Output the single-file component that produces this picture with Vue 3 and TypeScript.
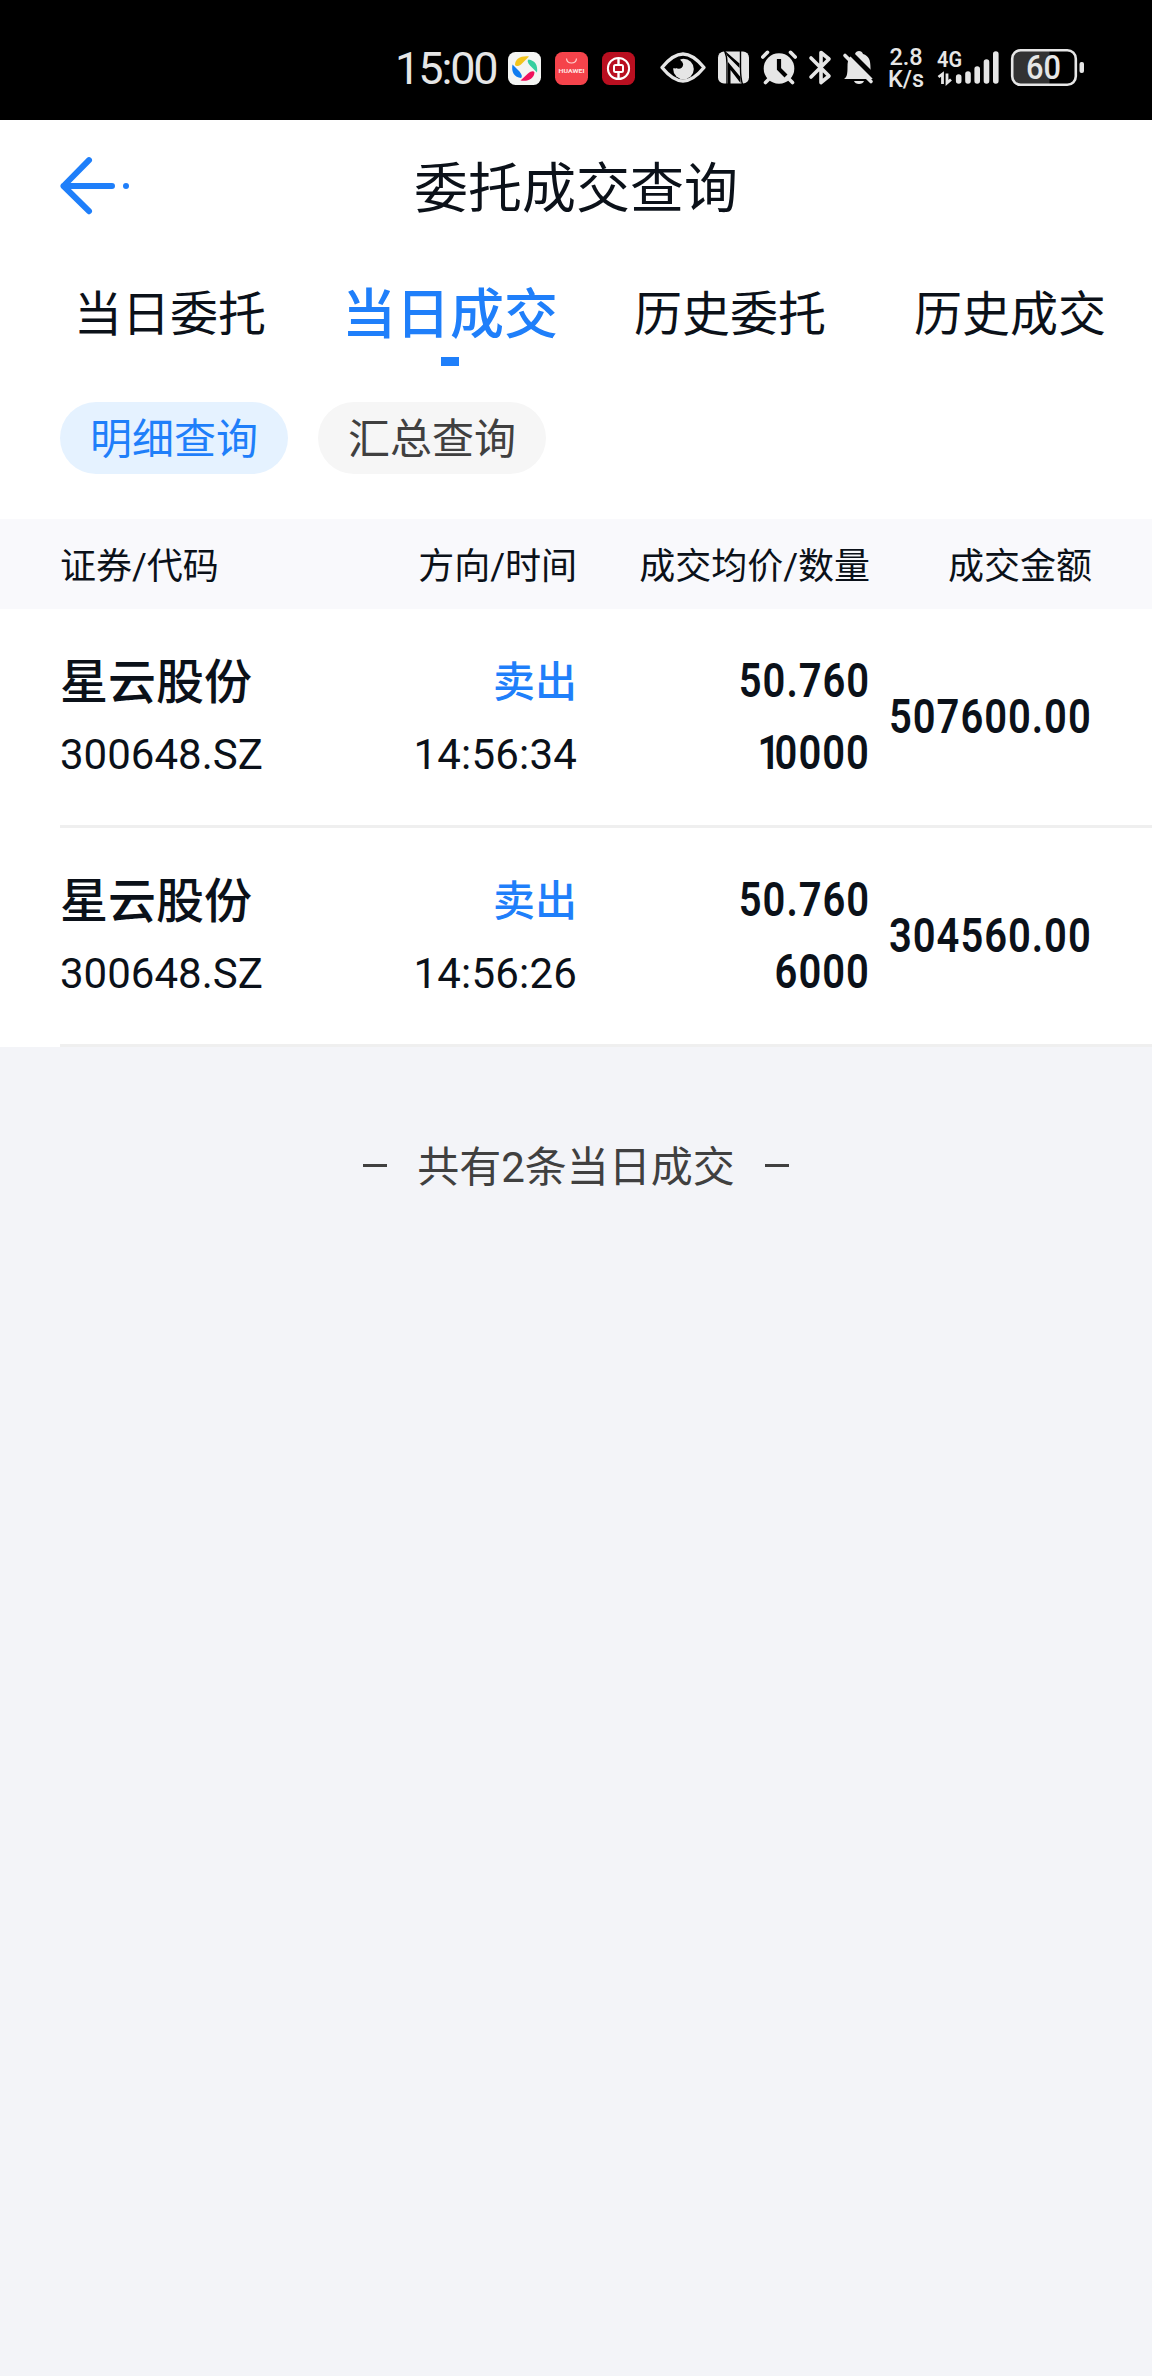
<script setup lang="ts">
interface Deal {
  name: string
  code: string
  side: string
  time: string
  price: string
  quantity: string
  amount: string
}

const tabs: string[] = ['当日委托', '当日成交', '历史委托', '历史成交']
const activeTab = 1
const chips: string[] = ['明细查询', '汇总查询']
const activeChip = 0
const columns: string[] = ['证券/代码', '方向/时间', '成交均价/数量', '成交金额']

const deals: Deal[] = [
  { name: '星云股份', code: '300648.SZ', side: '卖出', time: '14:56:34', price: '50.760', quantity: '10000', amount: '507600.00' },
  { name: '星云股份', code: '300648.SZ', side: '卖出', time: '14:56:26', price: '50.760', quantity: '6000', amount: '304560.00' },
]
</script>

<template>
  <div class="screen">
    <div class="status">
      <span class="clock">15:00</span>
      <svg class="app-icon" viewBox="0 0 33 33">
        <rect width="33" height="33" rx="7.500" fill="#f4f5f3" />
        <path d="M7 13C7 7 13 3.500 21 4.500L13 12.500C10 14.500 8 14.500 7 13Z" fill="#f3c51c" />
        <path d="M20.500 7.500C27 8.500 30 13 29 20.500L22 13.500C19.500 10.500 19 8.500 20.500 7.500Z" fill="#36cfa0" />
        <path d="M26.500 20.500C26 26.500 20 30 12.500 28.500L20 21.500C23 19 25.500 18.500 26.500 20.500Z" fill="#f0115c" />
        <path d="M13 26C6.500 25.500 3 20 4.500 12.500L11.500 19.500C14 22.500 14.500 25 13 26Z" fill="#0f7cf0" />
      </svg>
      <svg class="app-icon" viewBox="0 0 33 33">
        <rect width="33" height="33" rx="7.500" fill="#f5434b" />
        <path d="M11.500 6.500C12 12.500 21 12.500 21.500 6.500" fill="none" stroke="#ffd5d3" stroke-width="1.200" />
        <text x="16.500" y="21" text-anchor="middle" font-size="6" font-weight="700" textLength="26" lengthAdjust="spacingAndGlyphs" fill="#ffe6e4">HUAWEI</text>
      </svg>
      <svg class="app-icon" viewBox="0 0 33 33">
        <rect width="33" height="33" rx="7.500" fill="#b90f20" />
        <g fill="none" stroke="#fff">
          <circle cx="16.500" cy="16.500" r="10.600" stroke-width="2" />
          <rect x="12" y="13" width="9" height="7" rx="1.500" stroke-width="2" />
          <path d="M16.500 6V13M16.500 20V27" stroke-width="2.400" />
        </g>
      </svg>
      <svg class="glyphs" width="218" height="40" viewBox="658 48 218 40">
        <path d="M662 67.500C671 56.500 677 54 683 54S695 56.500 704 67.500C695 78.500 689 81 683 81S671 78.500 662 67.500Z" fill="none" stroke="#e6e6e6" stroke-width="3.400" stroke-linejoin="round" />
        <circle cx="683.500" cy="69" r="10.300" fill="#e6e6e6" />
        <circle cx="678.800" cy="64.500" r="4.300" fill="#000" />
        <path d="M671 65L673 61L680 58L681 62L676 68.500L672 68Z" fill="#000" />
        <rect x="718" y="51.500" width="31" height="32" rx="6" fill="#e6e6e6" />
        <path d="M725 51L739.500 63.500V68L727 55.500ZM728 62L740.500 77V83L730.500 70V84H728Z" fill="#000" />
        <path d="M724.500 50.500Q727 56 727 64V84.500M742.500 84.500Q740.500 78 740.500 68V50.500" fill="none" stroke="#000" stroke-width="1.400" />
        <circle cx="779" cy="68.500" r="15.300" fill="#e6e6e6" />
        <path d="M762.800 57L767.500 52.300M790.500 52.300L795.200 57M769 79L765.500 82.500M789 79L792.500 82.500" stroke="#e6e6e6" stroke-width="3.600" stroke-linecap="round" />
        <path d="M779 59V69L786 76" fill="none" stroke="#000" stroke-width="4.200" />
        <path d="M811 58L829 76L821 82.500V52.500L829 59L811 77" fill="none" stroke="#e6e6e6" stroke-width="3.600" stroke-linecap="round" stroke-linejoin="round" />
        <path d="M844 79C847 77 847.500 74 847.500 67C847.500 58 850 55.500 855 54C856 50 862 50 863 54C869 56 870.500 60 870.500 68C870.500 74 871 76 873 79Z" fill="#e6e6e6" />
        <path d="M854 81H864C863 85 855 85 854 81Z" fill="#e6e6e6" />
        <path d="M848 50.500L876 78.500" stroke="#000" stroke-width="5" />
        <path d="M845 55.500L871 81.500" stroke="#e6e6e6" stroke-width="3.600" stroke-linecap="round" />
      </svg>
      <div class="speed"><span>2.8</span><span>K/s</span></div>
      <svg class="signal" width="64" height="44" viewBox="936 44 64 44">
        <text x="937" y="67" font-size="22" font-weight="600" textLength="25" lengthAdjust="spacingAndGlyphs" fill="#e6e6e6">4G</text>
        <path d="M938.500 77L942.500 74V84M947 73.500V83L951 79.500" fill="none" stroke="#e6e6e6" stroke-width="2.800" />
        <path d="M958.700 77V81M968 74V81M977.200 69V81M986.500 62V81M995.800 54V81" stroke="#e6e6e6" stroke-width="5.600" stroke-linecap="round" />
      </svg>
      <svg class="battery" width="76" height="40" viewBox="1010 48 76 40">
        <path d="M1021 50.500H1049.500V84.500H1021Q1012.500 84.500 1012.500 76V59Q1012.500 50.500 1021 50.500Z" fill="#333" />
        <rect x="1012.200" y="50.200" width="63.600" height="34.600" rx="8.500" fill="none" stroke="#e6e6e6" stroke-width="2.600" />
        <rect x="1079.500" y="62" width="4.500" height="11" rx="2" fill="#e6e6e6" />
        <text x="1043.500" y="79.200" text-anchor="middle" font-size="33" font-weight="500" textLength="35" lengthAdjust="spacingAndGlyphs" fill="#e6e6e6">60</text>
      </svg>
    </div>

    <header class="top">
      <svg class="back" width="72" height="60" viewBox="0 0 72 60">
        <path d="M29 4.200L3.500 30L29 55.200M3.500 30H52" fill="none" stroke="#1f7ffa" stroke-width="6" stroke-linecap="round" stroke-linejoin="round" />
        <circle cx="66" cy="30" r="3" fill="#1f7ffa" />
      </svg>
      <h1>委托成交查询</h1>
    </header>

    <nav class="tabs">
      <div v-for="(tab, i) in tabs" :key="tab" class="tab" :class="{ active: i === activeTab }">
        <span class="tab-label">{{ tab }}</span>
        <i v-if="i === activeTab" class="mark"></i>
      </div>
    </nav>

    <div class="chips">
      <span v-for="(chip, i) in chips" :key="chip" class="chip" :class="{ active: i === activeChip }">{{ chip }}</span>
    </div>

    <div class="grid head">
      <span v-for="column in columns" :key="column">{{ column }}</span>
    </div>

    <div v-for="deal in deals" :key="deal.time" class="row">
      <div class="grid body">
        <div class="cell labels">
          <span class="name">{{ deal.name }}</span>
          <span class="plain">{{ deal.code }}</span>
        </div>
        <div class="cell labels">
          <span class="side">{{ deal.side }}</span>
          <span class="plain time">{{ deal.time }}</span>
        </div>
        <div class="cell">
          <span class="num">{{ deal.price }}</span>
          <span class="num"><span v-if="deal.quantity.startsWith('1')" class="slim">1</span>{{ deal.quantity.replace(/^1/, '') }}</span>
        </div>
        <div class="cell">
          <span class="num">{{ deal.amount }}</span>
        </div>
      </div>
    </div>

    <footer class="summary">
      <i></i><span>共有2条当日成交</span><i></i>
    </footer>
  </div>
</template>

<style>
body {
  background: #f3f4f8;
}
</style>

<style scoped>
.screen {
  width: 1152px;
  height: 2376px;
  overflow: hidden;
  background: #f3f4f8;
  color: #0b1119;
  font-family: Roboto, "Noto Sans CJK SC", sans-serif;
}
.status {
  display: flex;
  align-items: flex-start;
  box-sizing: border-box;
  height: 120px;
  padding: 48px 0 0 395px;
  background: #000;
  color: #e6e6e6;
}
.clock {
  flex: none;
  width: 113px;
  font-size: 45px;
  line-height: 42px;
  white-space: nowrap;
  letter-spacing: -2.1px;
}
.app-icon {
  flex: none;
  width: 33px;
  height: 33px;
  margin: 4px 14px 0 0;
}
.glyphs {
  flex: none;
  margin-left: 9px;
}
.speed {
  display: flex;
  flex: none;
  flex-direction: column;
  width: 40px;
  margin: -1px 10px 0;
  font-size: 23.5px;
  font-weight: 500;
  line-height: 21.5px;
  text-align: center;
}
.signal,
.battery {
  flex: none;
}
.signal {
  margin-top: -4px;
  overflow: visible;
}
.battery {
  margin-left: 10px;
}
.top {
  display: flex;
  align-items: center;
  height: 132px;
  padding: 0 60px;
  background: #fff;
}
.back {
  flex: none;
}
h1 {
  flex: 1;
  margin: 0 72px 0 0;
  padding-top: 8px;
  font-size: 54px;
  font-weight: 400;
  line-height: 80px;
  text-align: center;
}
.tabs {
  display: flex;
  height: 126px;
  padding: 0 2px 0 30px;
  background: #fff;
}
.tab {
  display: flex;
  flex: none;
  flex-direction: column;
  align-items: center;
  width: 280px;
  font-size: 48px;
}
.tab-label {
  height: 105px;
  line-height: 125px;
}
.tab.active {
  color: #1f7ffa;
  font-size: 54px;
  font-weight: 500;
}
.active .tab-label {
  line-height: 127px;
}
.mark {
  width: 18px;
  height: 9px;
  background: #1f7ffa;
}
.chips {
  display: flex;
  gap: 30px;
  height: 117px;
  padding: 24px 60px 0;
  background: #fff;
}
.chip {
  height: 72px;
  padding: 0 30px;
  border-radius: 36px;
  background: #f6f6f6;
  color: #404040;
  font-size: 42px;
  line-height: 75px;
}
.chip.active {
  background: #e5f2ff;
  color: #1f7ffa;
}
.grid {
  display: grid;
  grid-template-columns: 240px 277px 293px 222px;
  padding: 0 60px;
}
.head {
  height: 90px;
  background: #f9f9fc;
  font-size: 36px;
  line-height: 96px;
}
.head span:not(:first-child) {
  text-align: right;
}
.row {
  background: #fff;
}
.body {
  height: 216px;
  align-items: center;
}
.row::after {
  display: block;
  height: 3px;
  margin-left: 60px;
  background: #efefef;
  content: "";
}
.cell {
  display: flex;
  flex-direction: column;
  align-items: flex-end;
  line-height: 72px;
  white-space: nowrap;
}
.cell:first-child {
  align-items: flex-start;
}
.labels {
  padding-top: 3px;
}
.name {
  font-size: 48px;
  font-weight: 500;
}
.side {
  color: #1f7ffa;
  font-size: 42px;
  font-weight: 500;
}
.plain {
  font-size: 42px;
}
.time {
  letter-spacing: 0.2px;
}
.num {
  font-size: 49px;
  font-weight: 600;
  letter-spacing: 1.2px;
  transform: scaleX(0.815);
  transform-origin: right center;
}
.slim {
  letter-spacing: -7px;
}
.summary {
  display: flex;
  align-items: center;
  justify-content: center;
  gap: 30px;
  height: 236px;
  color: #404040;
  font-size: 42px;
}
.summary span {
  padding-bottom: 4px;
}
.summary i {
  width: 24px;
  height: 3px;
  background: #404040;
}
</style>
